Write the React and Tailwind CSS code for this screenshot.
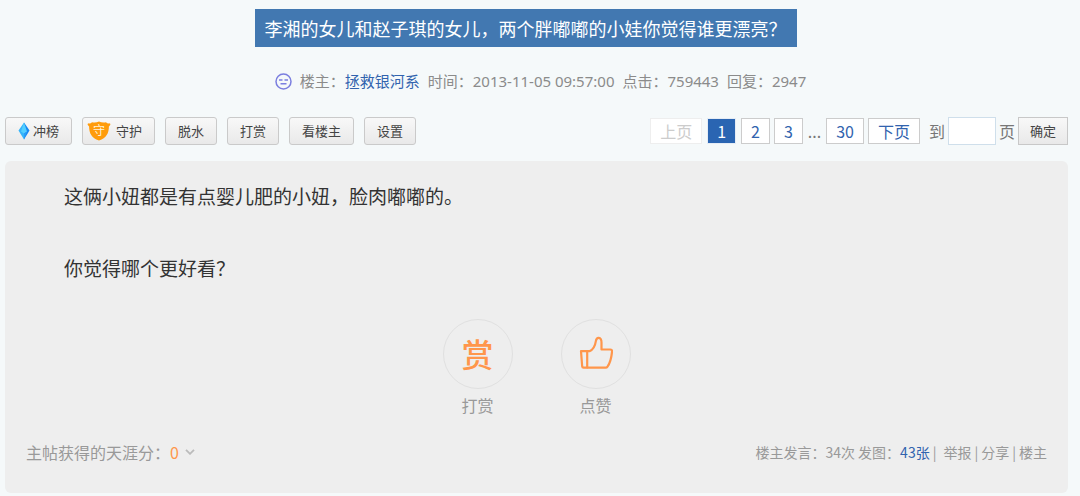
import React from "react";

const toolButton =
  "flex h-7 items-center justify-center rounded-[3px] border border-[#cacaca] bg-gradient-to-b from-[#f8f8f8] to-[#e9e9e9] px-3 text-[13px] leading-4 whitespace-nowrap text-[#444]";

const pageLink =
  "flex h-[26px] items-center border border-[#ccc] bg-white px-[9px] text-[#3163ae]";

const FaceIcon = () => (
  <svg viewBox="0 0 17 17" className="h-[17px] w-[17px]" fill="none" stroke="#7b7fdf" aria-hidden="true">
    <circle cx="8.5" cy="8.5" r="7.5" strokeWidth="1.5" />
    <path d="M4 7h3.500M9.500 7H13M5.500 10.800h6" strokeWidth="1.5" />
  </svg>
);

const DiamondIcon = () => (
  <svg viewBox="0 0 12 18" className="h-[18px] w-3" aria-hidden="true">
    <path d="M6 0.5 0.5 8.5 6 17.5z" fill="#35b4fa" />
    <path d="M6 0.5 11.5 8.5 6 17.5z" fill="#1688f2" />
    <path d="M6 0.5 3 9.5 6 11.5 9 9.5z" fill="#54cfff" />
    <path d="M6 11.5 9 9.5 6 17.5z" fill="#2b9df8" />
  </svg>
);

const ShieldIcon = () => (
  <svg viewBox="0 0 24 20" className="h-5 w-6" aria-hidden="true">
    <path
      d="M1 2.2c1.4.6 2.8.4 4-.9 2.600.6 4.800.3 7-.8 2.200 1.100 4.400 1.400 7 .8 1.200 1.300 2.600 1.500 4 .9l.4 1.600-1.500 1.800c0 6.400-2.400 11.800-9.900 13.900C4.500 17.400 2.100 12 2.100 5.600L.6 3.800z"
      fill="#ff9c0c"
    />
    <text x="12" y="14" textAnchor="middle" fontSize="12" fill="#fff3d8">
      守
    </text>
  </svg>
);

const ThumbIcon = () => (
  <svg
    viewBox="0 0 34 34"
    className="h-[34px] w-[34px]"
    fill="none"
    stroke="#ff964b"
    strokeWidth="2.2"
    strokeLinejoin="round"
    strokeLinecap="round"
    aria-hidden="true"
  >
    <path d="M2 15.200h8.500c4-1.600 5.600-5.200 6.300-9.800.4-2.900 1.400-3.800 3-3.600 2.200.3 2.700 2.200 2.700 4.600v7.100h8.700c1.500 0 2 .9 1.800 2.400-.6 6-2 11.300-4.500 14.700-.5.800-1.100 1.100-2 1.100H4.500c-.8 0-1.200-.4-1.300-1.200z" />
    <path d="M8.200 15.200v16.200" />
  </svg>
);

const Toolbar = () => (
  <div className="flex items-center gap-[10px]">
    <button type="button" className={toolButton}>
      <span className="mr-[3px] flex">
        <DiamondIcon />
      </span>
      冲榜
    </button>
    <button
      type="button"
      className="flex h-7 items-center justify-center gap-[5px] rounded-[3px] border border-[#cacaca] bg-gradient-to-b from-[#f8f8f8] to-[#e9e9e9] pr-3 pl-1 text-[13px] leading-4 whitespace-nowrap text-[#444]"
    >
      <ShieldIcon />
      守护
    </button>
    {["脱水", "打赏", "看楼主", "设置"].map((label) => (
      <button key={label} type="button" className={toolButton}>
        {label}
      </button>
    ))}
  </div>
);

const Pagination = () => (
  <nav className="flex items-center gap-1 text-base leading-6 whitespace-nowrap text-[#777]">
    <span className="flex h-[26px] items-center border border-[#eee] bg-white px-[9px] text-[#ccc]">
      上页
    </span>
    <span className="mx-px flex h-[26px] items-center border border-[#e5ecf5] bg-[#2a65b2] px-[9px] text-white">
      1
    </span>
    <a href="#2" className={pageLink}>
      2
    </a>
    <a href="#3" className={pageLink}>
      3
    </a>
    <span className="px-px">...</span>
    <a href="#30" className={pageLink}>
      30
    </a>
    <a href="#next" className={pageLink}>
      下页
    </a>
    <form className="ml-[5px] flex items-center gap-[3px]">
      <label htmlFor="page">到</label>
      <input
        id="page"
        type="text"
        className="h-7 w-12 border border-[#cfdfeb] bg-white px-1 text-sm outline-none"
      />
      <span>页</span>
      <button
        type="button"
        className="h-7 border border-[#c8c8c8] bg-gradient-to-b from-[#f8f8f8] to-[#e9e9e9] px-[11px] text-[13px] leading-4 text-[#444]"
      >
        确定
      </button>
    </form>
  </nav>
);

const circle =
  "flex h-[70px] w-[70px] items-center justify-center rounded-full border border-[#e0e0e0] pb-[3px] text-[32px] leading-8 font-medium text-[#ff964b]";

const App = () => {
  return (
    <div className="min-h-screen bg-[#f5f9fa] pt-[9px] pr-3 pb-[3px] pl-[5px] font-['Noto_Sans_CJK_SC',sans-serif]">
      <header className="flex flex-col items-center">
        <div className="pr-[22px]">
          <h1 className="bg-[#4278b1] px-[10px] py-[7px] text-lg leading-6 text-white">
            李湘的女儿和赵子琪的女儿，两个胖嘟嘟的小娃你觉得谁更漂亮？
          </h1>
        </div>
        <div className="mt-6 flex items-center gap-2 pl-2 font-['Noto_Sans','Noto_Sans_CJK_SC',sans-serif] text-[15px] leading-5 text-[#8b8b8b]">
          <FaceIcon />
          <span>
            楼主：
            <a href="#author" className="text-[#3163ae]">
              拯救银河系
            </a>
          </span>
          <span>时间：2013-11-05 09:57:00</span>
          <span>点击：759443</span>
          <span>回复：2947</span>
        </div>
      </header>

      <div className="mt-[26px] flex items-center justify-between">
        <Toolbar />
        <Pagination />
      </div>

      <main className="mt-4 rounded-md bg-[#eee] pt-[17px] pb-[29px]">
        <div className="space-y-9 px-[59px] text-[19px] leading-9 text-[#333]">
          <p>这俩小妞都是有点婴儿肥的小妞，脸肉嘟嘟的。</p>
          <p>你觉得哪个更好看？</p>
        </div>

        <div className="mt-[33px] flex justify-center gap-12 text-base leading-6 text-[#999]">
          <button type="button" className="flex flex-col items-center gap-1">
            <span className={circle}>赏</span>
            <span>打赏</span>
          </button>
          <button type="button" className="flex flex-col items-center gap-1">
            <span className={circle}>
              <ThumbIcon />
            </span>
            <span>点赞</span>
          </button>
        </div>

        <footer className="mt-[23px] flex items-center justify-between px-[21px] text-[#999]">
          <div className="flex items-center text-base leading-6">
            主帖获得的天涯分：
            <span className="text-[#ff964b]">0</span>
            <svg viewBox="0 0 10 6" className="ml-[6px] h-[6px] w-[10px]" fill="none" stroke="#bbb" strokeWidth="1.8" aria-hidden="true">
              <path d="M1 .8 5 4.800 9 .8" />
            </svg>
          </div>
          <div className="flex items-center gap-[3px] text-sm leading-6">
            <span>楼主发言：34次</span>
            <span>
              发图：
              <a href="#images" className="text-[#3163ae]">
                43张
              </a>
            </span>
            <span>|</span>
            <a href="#report" className="ml-1">
              举报
            </a>
            <span>|</span>
            <a href="#share">分享</a>
            <span>|</span>
            <a href="#author">楼主</a>
          </div>
        </footer>
      </main>
    </div>
  );
};

export default App;
